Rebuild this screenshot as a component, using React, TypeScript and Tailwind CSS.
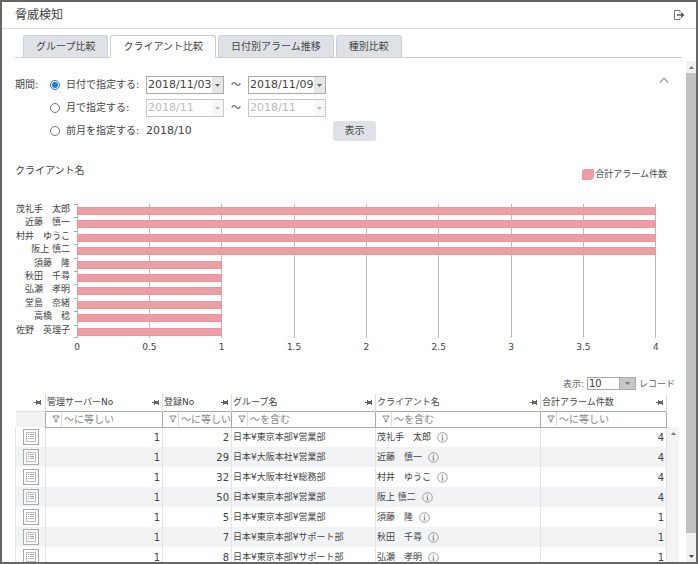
const tabs = ["グループ比較", "クライアント比較", "日付別アラーム推移", "種別比較"];

const chartData = [
  { name: "茂礼手　太郎", count: 4 },
  { name: "近藤　慎一", count: 4 },
  { name: "村井　ゆうこ", count: 4 },
  { name: "阪上 慎二", count: 4 },
  { name: "須藤　隆", count: 1 },
  { name: "秋田　千尋", count: 1 },
  { name: "弘瀬　孝明", count: 1 },
  { name: "堂島　奈緒", count: 1 },
  { name: "高橋　稔", count: 1 },
  { name: "佐野　英理子", count: 1 },
];

const ticks = [0, 0.5, 1, 1.5, 2, 2.5, 3, 3.5, 4];

const columns = [
  { title: "管理サーバーNo", filter: "～に等しい" },
  { title: "登録No", filter: "～に等しい" },
  { title: "グループ名", filter: "～を含む" },
  { title: "クライアント名", filter: "～を含む" },
  { title: "合計アラーム件数", filter: "～に等しい" },
];

const rows = [
  { server: 1, no: 2, group: "日本¥東京本部¥営業部", client: "茂礼手　太郎", count: 4 },
  { server: 1, no: 29, group: "日本¥大阪本社¥営業部", client: "近藤　慎一", count: 4 },
  { server: 1, no: 32, group: "日本¥大阪本社¥総務部", client: "村井　ゆうこ", count: 4 },
  { server: 1, no: 50, group: "日本¥東京本部¥営業部", client: "阪上 慎二", count: 4 },
  { server: 1, no: 5, group: "日本¥東京本部¥営業部", client: "須藤　隆", count: 1 },
  { server: 1, no: 7, group: "日本¥東京本部¥サポート部", client: "秋田　千尋", count: 1 },
  { server: 1, no: 8, group: "日本¥東京本部¥サポート部", client: "弘瀬　孝明", count: 1 },
];

function Pin() {
  return (
    <svg width="7" height="7" viewBox="0 0 7 7" className="shrink-0" fill="#666">
      <path d="M0 3h2v1H0zM2 1h1v5H2zM3 2h3v3H3zM6 1h1v5H6z" />
    </svg>
  );
}

function Combo({ label, value, disabled = false }: { label: string; value: string; disabled?: boolean }) {
  return (
    <div className="relative w-[78px]">
      <select
        aria-label={label}
        disabled={disabled}
        defaultValue={value}
        className={`block h-[18px] w-full appearance-none border pl-px text-[11px] leading-4 opacity-100 ${
          disabled ? "border-[#c8c8c8] bg-white text-[#bbb]" : "border-[#aaa] bg-white text-[#444]"
        }`}
      >
        <option>{value}</option>
      </select>
      <span
        className={`pointer-events-none absolute inset-y-px right-px flex w-[11px] items-center justify-center ${
          disabled ? "bg-[#f7f7f7]" : "bg-[#e6e6e6]"
        }`}
      >
        <svg width="5" height="3" viewBox="0 0 5 3" fill={disabled ? "#bbb" : "#666"}>
          <path d="M0 0h5L2.5 3z" />
        </svg>
      </span>
    </div>
  );
}

function PeriodForm() {
  return (
    <form className="flex items-start pt-[15px] text-[10px]" onSubmit={(e) => e.preventDefault()}>
      <span className="w-[35px] leading-[18px]">期間:</span>
      <div className="grid flex-1 auto-rows-[18px] grid-cols-[96px_78px_24px_78px_1fr] items-center gap-y-[5px] leading-[18px]">
        <label className="flex items-center gap-[6px]">
          <input type="radio" name="period" defaultChecked className="m-0 size-[10px] accent-[#1a7ae0]" />
          日付で指定する:
        </label>
        <Combo label="開始日" value="2018/11/03" />
        <span className="text-center">～</span>
        <Combo label="終了日" value="2018/11/09" />
        <span />

        <label className="flex items-center gap-[6px]">
          <input type="radio" name="period" className="m-0 size-[10px]" />
          月で指定する:
        </label>
        <Combo label="開始月" value="2018/11" disabled />
        <span className="text-center">～</span>
        <Combo label="終了月" value="2018/11" disabled />
        <span />

        <label className="flex items-center gap-[6px]">
          <input type="radio" name="period" className="m-0 size-[10px]" />
          前月を指定する:
        </label>
        <span className="text-[11px]">2018/10</span>
        <span />
        <span />
        <button type="submit" className="ml-[7px] h-5 w-[43px] rounded-[3px] bg-[#dee2e6] text-[10px]">
          表示
        </button>
      </div>
      <button type="button" aria-label="閉じる" className="mr-[14px]">
        <svg width="10" height="10" viewBox="0 0 10 10" fill="none" stroke="#999" strokeWidth="1.2">
          <path d="M0.8 6.5 5 2.3 9.2 6.5" />
        </svg>
      </button>
    </form>
  );
}

function AlarmChart() {
  const x0 = 62;
  const unit = 144.7;
  const rowH = 13.4;
  return (
    <svg viewBox="0 0 668 152" className="block w-full" fill="#444" fontSize="9">
      {ticks.map((t) => (
        <g key={t}>
          <path d={`M${Math.floor(x0 + t * unit) + 0.5} 3v134`} stroke="#b9bbbf" />
          <text x={x0 + t * unit} y="149" textAnchor="middle">
            {t}
          </text>
        </g>
      ))}
      {chartData.map((d, i) => (
        <g key={d.name}>
          <path d={`M59 ${Math.round(3 + i * rowH) + 0.5}h3`} stroke="#aaa" />
          <rect
            x={x0 + 0.5}
            y={Math.round(6 + i * rowH) + 0.5}
            width={Math.floor(d.count * unit)}
            height="7"
            fill="#ec9ea5"
            stroke="#f0949c"
          />
          <text x="55" y={11 + i * rowH} textAnchor="end">
            {d.name}
          </text>
        </g>
      ))}
      <path d="M59 136.5h3" stroke="#aaa" />
    </svg>
  );
}

function ClientTable() {
  return (
    <div className="mr-1 flex">
      <table className="min-w-0 flex-1 table-fixed border-collapse text-[9px] leading-[19px]">
        <colgroup>
          <col className="w-[30px]" />
          <col className="w-[117px]" />
          <col className="w-[69px]" />
          <col className="w-[144px]" />
          <col />
          <col className="w-[126px]" />
        </colgroup>
        <thead>
          <tr className="h-[17px]">
            <th className="p-0 pr-1">
              <div className="flex justify-end">
                <Pin />
              </div>
            </th>
            {columns.map((c) => (
              <th key={c.title} className="border-x border-[#ddd] p-0 font-normal">
                <div className="flex items-center justify-between pr-[3px] pl-px leading-[16px] whitespace-nowrap">
                  {c.title}
                  <Pin />
                </div>
              </th>
            ))}
          </tr>
          <tr className="h-4">
            <td className="border-t border-[#ddd] bg-[#f3f3f3] p-0" />
            {columns.map((c) => (
              <td key={c.title} className="border border-[#aaa] p-0">
                <div className="flex items-center overflow-hidden pl-[6px]">
                  <svg width="8" height="8" viewBox="0 0 8 8" className="shrink-0" fill="none" stroke="#888">
                    <path d="M0.8 1h6.4L4.8 4.3v2.5H3.2V4.3z" />
                  </svg>
                  <input
                    aria-label={c.title}
                    placeholder={c.filter}
                    className="ml-px h-[14px] w-0 min-w-0 flex-1 border-l border-[#ddd] pl-[2px] text-[10px] placeholder:text-[#888]"
                  />
                </div>
              </td>
            ))}
          </tr>
        </thead>
        <tbody>
          {rows.map((r) => (
            <tr key={r.no} className="h-5 odd:bg-white even:bg-[#f2f3f5]">
              <td className="border-x border-[#e4e4e4] p-0">
                <button
                  type="button"
                  aria-label="詳細"
                  className="ml-[7px] flex size-4 items-center justify-center border border-[#aaa] bg-white"
                >
                  <svg width="10" height="10" viewBox="0 0 10 10" fill="none" stroke="#aaa">
                    <path d="M0.5 0.5h9v9h-9z" stroke="#bbb" />
                    <path d="M2 2.5h1M4 2.5h4M2 4.5h1M4 4.5h4M2 6.5h1M4 6.5h4" />
                  </svg>
                </button>
              </td>
              <td className="border-x border-[#e4e4e4] p-0 pr-[2px] text-right text-[10px]">{r.server}</td>
              <td className="border-x border-[#e4e4e4] p-0 pr-[2px] text-right text-[10px]">{r.no}</td>
              <td className="border-x border-[#e4e4e4] p-0 pl-px whitespace-nowrap">{r.group}</td>
              <td className="border-x border-[#e4e4e4] p-0 pl-px">
                <div className="flex items-center gap-[6px]">
                  {r.client}
                  <svg width="11" height="11" viewBox="0 0 11 11" fill="none" stroke="#888">
                    <circle cx="5.5" cy="5.5" r="4.8" strokeWidth="0.8" />
                    <path d="M5.5 2.5v1.2M4.5 4.8h1v3M4.3 8h2.4" />
                  </svg>
                </div>
              </td>
              <td className="border-x border-[#e4e4e4] p-0 pr-[2px] text-right text-[10px]">{r.count}</td>
            </tr>
          ))}
        </tbody>
      </table>
      <div className="mt-[33px] flex w-3 justify-center bg-[#f3f3f3] pt-[5px]">
        <svg width="5" height="3" viewBox="0 0 5 3" fill="#777">
          <path d="M0 3h5L2.5 0z" />
        </svg>
      </div>
    </div>
  );
}

export default function App() {
  return (
    <div className="flex h-screen flex-col overflow-hidden border-2 border-[#666] bg-white font-['DejaVu_Sans','Noto_Sans_CJK_JP',sans-serif] text-[#444]">
      <header className="flex h-[27px] shrink-0 items-center justify-between border-b border-[#ddd] pr-[11px] pl-[13px]">
        <h1 className="text-[12px] leading-4">脅威検知</h1>
        <button type="button" aria-label="ログアウト">
          <svg width="11" height="10" viewBox="0 0 11 10" fill="none" stroke="#777">
            <path d="M6 2.5V0.5H0.5v9H6V7.5" />
            <path d="M3 5h6" stroke="#555" strokeWidth="1.4" />
            <path d="M7 2 10.5 5 7 8z" fill="#555" stroke="none" />
          </svg>
        </button>
      </header>

      <nav className="mr-[14px] ml-[13px] flex h-[29px] shrink-0 items-end gap-[2px] border-b border-[#ccc] pl-2 text-[10px]">
        {tabs.map((tab, i) => (
          <button
            key={tab}
            type="button"
            className={`rounded-t-[3px] border px-3 ${
              i === 1 ? "-mb-px h-[23px] border-[#ccc] border-b-white bg-white" : "h-[22px] border-[#ccd0d4] border-b-0 bg-[#dee2e6]"
            }`}
          >
            {tab}
          </button>
        ))}
      </nav>

      <div className="flex min-h-0 flex-1">
        <main className="min-w-0 flex-1 overflow-hidden pt-[3px] pl-[13px]">
          <PeriodForm />

          <section className="pt-[21px]">
            <div className="flex h-10 justify-between">
              <h2 className="text-[10px] leading-5">クライアント名</h2>
              <div className="flex items-start gap-px pt-[5px] pr-4 text-[9px] leading-4">
                <span className="mt-[3px] h-[11px] w-3 rounded-tl-[3px] rounded-br-[4px] border border-[#f0949c] bg-[#ec9ea5]" />
                合計アラーム件数
              </div>
            </div>
            <AlarmChart />
          </section>

          <div className="flex items-center justify-end gap-[3px] pt-6 pr-2 pb-1 text-[9px] leading-3 text-[#666]">
            <label htmlFor="page-size">表示:</label>
            <div className="relative w-[49px]">
              <select
                id="page-size"
                defaultValue="10"
                className="block h-[13px] w-full appearance-none border border-[#aaa] bg-white pl-px text-[10px] leading-[11px] text-[#444]"
              >
                <option>10</option>
                <option>20</option>
                <option>50</option>
              </select>
              <span className="pointer-events-none absolute inset-y-0 right-0 flex w-[17px] items-center justify-center border border-[#aaa] bg-[#c8c8c8]">
                <svg width="5" height="3" viewBox="0 0 5 3" fill="#777">
                  <path d="M0 0h5L2.5 3z" />
                </svg>
              </span>
            </div>
            <span>レコード</span>
          </div>

          <ClientTable />
        </main>

        <div className="mt-[3px] ml-[3px] flex w-[10px] flex-col items-center bg-[#f1f1f1] pt-[5px]">
          <svg width="5" height="3" viewBox="0 0 5 3" fill="#777">
            <path d="M0 3h5L2.5 0z" />
          </svg>
          <div className="mt-1 w-full flex-1 bg-[#c1c1c1]" />
          <svg width="5" height="3" viewBox="0 0 5 3" fill="#444" className="mt-[22px] mb-1">
            <path d="M0 0h5L2.5 3z" />
          </svg>
        </div>
      </div>
    </div>
  );
}
